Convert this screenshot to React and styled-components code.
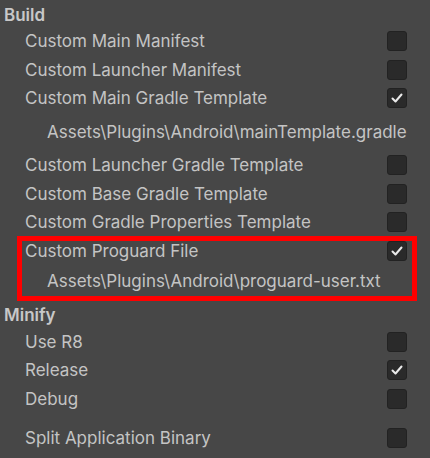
import React from 'react'
import styled, { createGlobalStyle } from 'styled-components'

const GlobalStyle = createGlobalStyle`
    html, body{
        margin:0;
        padding:0;
        background:#474747;
    }
    body{
        font-family: Inter, "Noto Sans", "Liberation Sans", sans-serif;
        -webkit-font-smoothing: antialiased;
    }
`

const Panel = styled.div`
    display:flex;
    flex-direction:column;
    width:430px;
    height:458px;
    background:#474747;
    color:#c4c4c4;
    font-size:17px;
    overflow:hidden;
`

const Header = styled.div`
    display:flex;
    align-items:center;
    box-sizing:border-box;
    height:${p => p.h}px;
    padding:${p => p.pt}px 0 0 4px;
    font-weight:600;
    color:#c8c8c8;
`

const Row = styled.div`
    display:flex;
    align-items:center;
    justify-content:space-between;
    box-sizing:border-box;
    height:28.5px;
    padding:0 23.5px 0 25px;
    white-space:nowrap;
`

const PathRow = styled.div`
    display:flex;
    align-items:center;
    box-sizing:border-box;
    height:${p => p.h}px;
    padding-left:47px;
    white-space:nowrap;
`

const Spacer = styled.div`
    height:${p => p.h}px;
`

const Box = styled.span`
    display:flex;
    align-items:center;
    justify-content:center;
    box-sizing:border-box;
    width:19.5px;
    height:20px;
    border-radius:3px;
    background:#2a2a2a;
    border:1px solid #222;
    svg{
        width:14px;
        height:14px;
    }
`

// red annotation frame drawn over the group
const Highlight = styled.div`
    position:relative;
    display:flex;
    flex-direction:column;
    &::after{
        content:'';
        position:absolute;
        top:0;
        bottom:-3px;
        left:17px;
        right:13px;
        border:5px solid #ff0000;
        pointer-events:none;
    }
`

const Check = ({checked}) => (
    <Box>
        {checked &&
            <svg viewBox="0 0 14 14">
                <polyline points="2.5,7.5 5.5,10.5 11.5,3.5" fill="none" stroke="#eaeaea" strokeWidth="2" strokeLinecap="round" strokeLinejoin="round"/>
            </svg>
        }
    </Box>
)

const Toggle = ({label, checked}) => (
    <Row>
        <span>{label}</span>
        <Check checked={checked}/>
    </Row>
)

export default function App(){
    return (
        <Panel>
            <GlobalStyle/>
            <Header h={26.75} pt={3}>Build</Header>
            <Toggle label="Custom Main Manifest"/>
            <Toggle label="Custom Launcher Manifest"/>
            <Toggle label="Custom Main Gradle Template" checked/>
            <PathRow h={38.5}>Assets\Plugins\Android\mainTemplate.gradle</PathRow>
            <Toggle label="Custom Launcher Gradle Template"/>
            <Toggle label="Custom Base Gradle Template"/>
            <Toggle label="Custom Gradle Properties Template"/>
            <Highlight>
                <Toggle label="Custom Proguard File" checked/>
                <PathRow h={33}>Assets\Plugins\Android\proguard-user.txt</PathRow>
            </Highlight>
            <Header h={29.75} pt={5}>Minify</Header>
            <Toggle label="Use R8"/>
            <Toggle label="Release" checked/>
            <Toggle label="Debug"/>
            <Spacer h={10.75}/>
            <Toggle label="Split Application Binary"/>
        </Panel>
    )
}
